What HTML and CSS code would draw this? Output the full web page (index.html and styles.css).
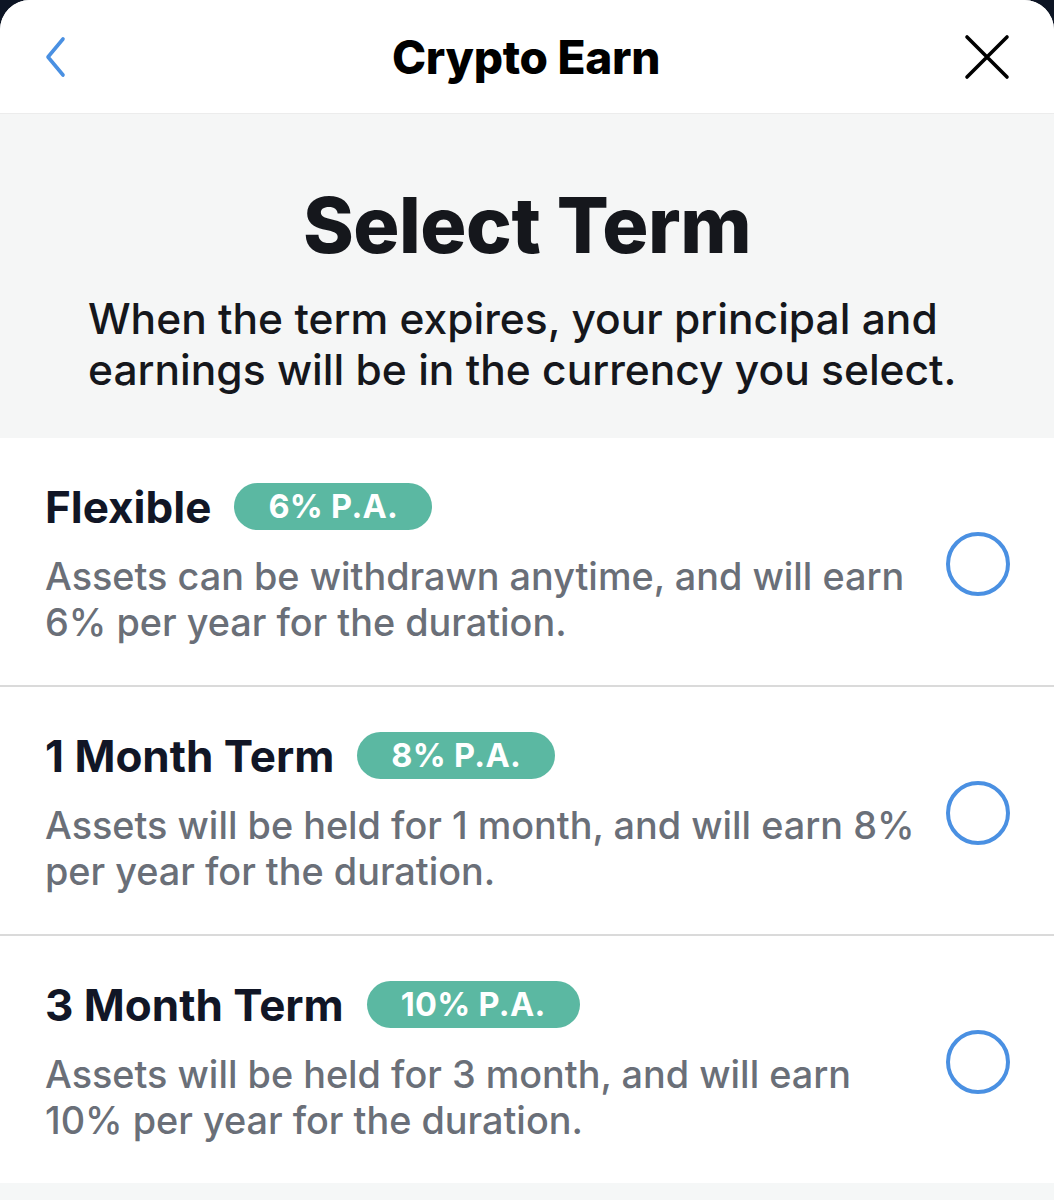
FILE: index.html
```html
<!DOCTYPE html>
<html lang="en">
<head>
<meta charset="utf-8">
<title>Crypto Earn</title>
<link rel="stylesheet" href="styles.css">
</head>
<body>
<div class="sheet">
  <header class="topbar">
    <button class="icon-btn back" aria-label="Back">
      <svg width="24" height="42" viewBox="0 0 24 42"><path d="M21 3 L6 21 L21 39" fill="none" stroke="#4a90e2" stroke-width="3.6" stroke-linecap="round" stroke-linejoin="round"/></svg>
    </button>
    <h1 class="topbar-title">Crypto Earn</h1>
    <button class="icon-btn close" aria-label="Close">
      <svg width="46" height="46" viewBox="0 0 46 46"><path d="M3 3 L43 43 M43 3 L3 43" fill="none" stroke="#000" stroke-width="3.6" stroke-linecap="round"/></svg>
    </button>
  </header>

  <section class="intro">
    <h2 class="intro-title">Select Term</h2>
    <p class="intro-text">When the term expires, your principal and earnings will be in the currency you select.</p>
  </section>

  <ul class="terms">
    <li class="term">
      <div class="term-body">
        <div class="term-head">
          <span class="term-name">Flexible</span>
          <span class="rate">6% P.A.</span>
        </div>
        <p class="term-desc">Assets can be withdrawn anytime, and will earn 6% per year for the duration.</p>
      </div>
      <span class="radio"></span>
    </li>
    <li class="term">
      <div class="term-body">
        <div class="term-head">
          <span class="term-name">1 Month Term</span>
          <span class="rate">8% P.A.</span>
        </div>
        <p class="term-desc">Assets will be held for 1 month, and will earn 8% per year for the duration.</p>
      </div>
      <span class="radio"></span>
    </li>
    <li class="term">
      <div class="term-body">
        <div class="term-head">
          <span class="term-name">3 Month Term</span>
          <span class="rate">10% P.A.</span>
        </div>
        <p class="term-desc">Assets will be held for 3 month, and will earn 10% per year for the duration.</p>
      </div>
      <span class="radio"></span>
    </li>
  </ul>
  <div class="footer-space"></div>
</div>
</body>
</html>
```

FILE: styles.css
```css
* { box-sizing: border-box; }

html, body {
  margin: 0;
  padding: 0;
  background: #0d1524;
}

body {
  font-family: Inter, "Noto Sans", "Liberation Sans", sans-serif;
  color: #14161c;
}

.sheet {
  background: #f5f6f6;
  border-radius: 30px 30px 0 0;
  overflow: hidden;
  min-height: 1200px;
}

/* top navigation bar */
.topbar {
  height: 114px;
  background: #fff;
  border-bottom: 1px solid #ececec;
  display: flex;
  align-items: center;
  justify-content: space-between;
  padding: 0 44px 0 42px;
}

.icon-btn {
  background: none;
  border: 0;
  padding: 0;
  display: flex;
  align-items: center;
  justify-content: center;
  width: 50px;
}

.back { justify-content: flex-start; }
.close { justify-content: flex-end; }

.topbar-title {
  margin: 0;
  font-size: 46px;
  font-weight: 800;
  color: #000;
  letter-spacing: -0.3px;
}

/* heading block */
.intro {
  padding: 66px 20px 43px;
}

.intro-title {
  margin: 0;
  text-align: center;
  font-size: 77px;
  line-height: 90px;
  font-weight: 800;
  color: #15171c;
  letter-spacing: -0.5px;
}

.intro-text {
  margin: 23px 0 0;
  padding-left: 68px;
  font-size: 42.5px;
  line-height: 51px;
  font-weight: 500;
  color: #15171c;
}

/* term list */
.terms {
  list-style: none;
  margin: 0;
  padding: 0;
}

.term {
  background: #fff;
  display: flex;
  align-items: center;
  padding: 45px 44px 40px 45px;
  border-bottom: 2px solid #dadada;
}

.term:last-child { border-bottom: 0; }

.term-body {
  width: 885px;
  flex: none;
}

.term-head {
  display: flex;
  align-items: center;
  gap: 23px;
  height: 47px;
}

.term-name {
  font-size: 44px;
  font-weight: 700;
  color: #111626;
}

.rate {
  background: #5bb8a2;
  color: #fff;
  font-size: 32.5px;
  font-weight: 700;
  height: 47px;
  line-height: 47px;
  padding: 0 34px;
  border-radius: 24px;
  letter-spacing: 0.3px;
}

.term-desc {
  margin: 23px 0 0;
  font-size: 37.8px;
  line-height: 46px;
  font-weight: 500;
  color: #6a6f78;
}

.radio {
  margin-left: auto;
  width: 64px;
  height: 64px;
  border: 4px solid #4a90e2;
  border-radius: 50%;
  flex: none;
}

.footer-space {
  height: 60px;
  background: #f5f7f7;
}
```
